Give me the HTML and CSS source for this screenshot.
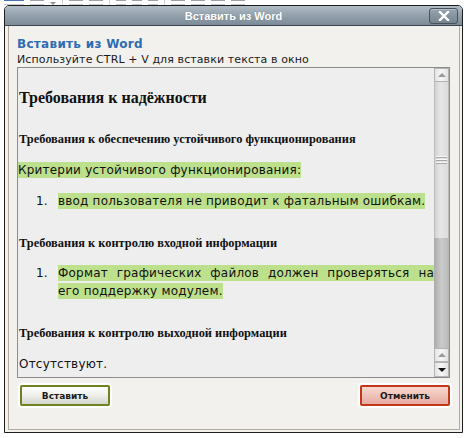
FILE: index.html
```html
<!DOCTYPE html>
<html lang="ru">
<head>
<meta charset="utf-8">
<title>Вставить из Word</title>
<link rel="stylesheet" href="styles.css">
</head>
<body>
<div class="toolbar">
  <span class="tb tb-list"></span>
  <span class="tb tb-lines"></span>
  <span class="tb tb-arrow"></span>
  <span class="tb-sep"></span>
  <span class="tb tb-lines"></span>
  <span class="tb tb-lines"></span>
  <span class="tb-sep"></span>
  <span class="tb tb-small"></span>
  <span class="tb tb-small"></span>
  <span class="tb tb-small"></span>
  <span class="tb-sep"></span>
  <span class="tb tb-lines"></span>
  <span class="tb tb-lines"></span>
  <span class="tb tb-lines"></span>
  <span class="tb tb-lines"></span>
</div>
<div class="dialog">
  <div class="titlebar">
    <span></span>
    <span class="title">Вставить из Word</span>
    <button class="close" type="button" aria-label="Закрыть">
      <svg width="12" height="10" viewBox="0 0 12 10"><path d="M2 1 L10 9 M10 1 L2 9" stroke="#fff" stroke-width="2.4" stroke-linecap="square"/></svg>
    </button>
  </div>
  <div class="body">
    <div class="inner">
      <div class="heading">Вставить из Word</div>
      <div class="hint">Используйте CTRL + V для вставки текста в окно</div>
      <div class="frame">
        <div class="doc">
          <h1>Требования к надёжности</h1>
          <h3 class="h-a">Требования к обеспечению устойчивого функционирования</h3>
          <p class="p-a"><span class="hl">Критерии устойчивого функционирования:</span></p>
          <ol class="ol-a"><li><span class="hl">ввод пользователя не приводит к фатальным ошибкам.</span></li></ol>
          <h3 class="h-b">Требования к контролю входной информации</h3>
          <ol class="ol-b"><li><span class="hl">Формат графических файлов должен проверяться на его поддержку модулем.</span></li></ol>
          <h3 class="h-b">Требования к контролю выходной информации</h3>
          <p class="p-b">Отсутствуют.</p>
        </div>
        <div class="scrollbar">
          <div class="sb-btn"><span class="arr up dim"></span></div>
          <div class="sb-thumb"><span class="grip"></span></div>
          <div class="sb-track"></div>
          <div class="sb-btn"><span class="arr up dim"></span></div>
          <div class="sb-btn"><span class="arr down"></span></div>
        </div>
      </div>
      <div class="buttons">
        <button class="btn ok" type="button">Вставить</button>
        <button class="btn cancel" type="button">Отменить</button>
      </div>
    </div>
  </div>
</div>
</body>
</html>
```
FILE: styles.css
```css
html, body {
  margin: 0;
  padding: 0;
  background: #ffffff;
}
body {
  padding: 0 5px 0 4px;
  font-family: "DejaVu Sans", sans-serif;
}
.toolbar {
  height: 5px;
  overflow: hidden;
  display: flex;
  align-items: flex-end;
  gap: 6px;
}
.tb {
  display: block;
  height: 3px;
  width: 14px;
  border-top: 1px solid #9aa0a8;
  border-bottom: 1px solid #c8ccd2;
}
.tb-list { width: 20px; border-top-color: #4a72b8; }
.tb-small { width: 10px; }
.tb-arrow {
  width: 0; height: 0;
  border-left: 3px solid transparent;
  border-right: 3px solid transparent;
  border-top: 3px solid #8a9098;
  border-bottom: 0;
}
.tb-sep { width: 1px; height: 5px; background: #d0d4d8; }

.dialog {
  width: 457px;
  border: 1px solid #1e1e1e;
  border-radius: 5px 5px 0 0;
  overflow: hidden;
}
.titlebar {
  height: 19px;
  border-bottom: 1px solid #39444e;
  background: linear-gradient(#b0bcc6 0%, #95a3ae 45%, #7d8c99 100%);
  display: grid;
  grid-template-columns: 1fr auto 1fr;
  align-items: center;
}
.title {
  color: #ffffff;
  font-family: "Liberation Sans", sans-serif;
  font-weight: bold;
  font-size: 11px;
  text-shadow: 0 0 1px rgba(60,70,80,.4);
}
.close {
  justify-self: end;
  margin-right: 4px;
  width: 29px;
  height: 16px;
  padding: 0;
  border: 1px solid #46525d;
  border-radius: 3px;
  background: linear-gradient(#96a4b0, #76858f);
  box-shadow: inset 0 1px 0 rgba(255,255,255,.3);
  display: flex;
  align-items: center;
  justify-content: center;
}
.close svg { display: block; }

.body {
  background: #f2f1ee;
  padding: 0 2px 2px 3px;
}
.inner {
  height: 392px;
  border: 1px solid #b3aa9b;
  border-top: none;
  padding: 11px 9px 0 8px;
}
.heading {
  color: #2f6cb2;
  font-weight: bold;
  font-size: 12px;
  line-height: 15px;
  letter-spacing: 0.3px;
}
.hint {
  color: #1a1a1a;
  font-size: 11px;
  line-height: 15px;
  letter-spacing: 0.1px;
}
.frame {
  height: 309px;
  border: 1px solid #8c8c8c;
  background: #eeeeee;
  display: flex;
}
.doc {
  flex: 1;
  overflow: hidden;
  padding: 20px 0 0 1px;
  color: #111;
  font-size: 12px;
  letter-spacing: 0.2px;
}
.doc h1 {
  margin: 0;
  font-family: "Liberation Serif", serif;
  font-size: 16px;
  line-height: 20px;
  font-weight: bold;
  letter-spacing: 0;
}
.doc h3 {
  margin: 0;
  font-family: "Liberation Serif", serif;
  font-size: 12.4px;
  line-height: 16px;
  font-weight: bold;
  letter-spacing: 0;
}
.doc .h-a { margin-top: 23px; }
.doc .h-b { margin-top: 25px; }
.doc p, .doc ol { margin: 0; line-height: 18px; }
.doc .p-a { margin-top: 14px; margin-left: -1px; }
.doc .ol-a { margin-top: 13px; }
.doc .ol-b { margin-top: 13px; text-align: justify; }
.doc .p-b { margin-top: 14px; }
.doc ol { padding-left: 39px; }
.doc li::marker { content: counter(list-item) ". \2002"; }
.hl {
  background: #bde08c;
  padding: 1px 0;
}

.scrollbar {
  width: 15px;
  display: flex;
  flex-direction: column;
  background: #d6d6d6;
}
.sb-btn {
  height: 14px;
  border: 1px solid #b4b4b4;
  box-sizing: border-box;
  background: linear-gradient(90deg, #e4e4e4, #f6f6f6 50%, #e2e2e2);
  display: flex;
  align-items: center;
  justify-content: center;
}
.sb-btn + .sb-btn { height: 15px; }
.arr {
  width: 0; height: 0;
  border-left: 4px solid transparent;
  border-right: 4px solid transparent;
}
.arr.up { border-bottom: 4px solid #111; }
.arr.down { border-top: 4px solid #111; }
.arr.dim.up { border-bottom-color: #9a9a9a; }
.sb-thumb {
  height: 156px;
  border-left: 1px solid #bdbdbd;
  border-right: 1px solid #bdbdbd;
  background: linear-gradient(90deg, #d2d2d2, #e6e6e6 40%, #dcdcdc);
  display: flex;
  align-items: center;
  justify-content: center;
}
.grip {
  width: 11px;
  height: 9px;
  background: repeating-linear-gradient(#f8f8f8 0 1px, #a8a8a8 1px 2px, transparent 2px 3px);
}
.sb-track {
  flex: 1;
  background: linear-gradient(90deg, #aaaaaa, #cbcbcb 50%, #b8b8b8);
}

.buttons {
  display: flex;
  justify-content: space-between;
  margin-top: 7px;
  padding-left: 3px;
}
.btn {
  width: 90px;
  height: 21px;
  padding: 0;
  font-family: "DejaVu Sans", sans-serif;
  font-size: 9px;
  font-weight: bold;
  color: #1a1a1a;
  border-radius: 2px;
  box-shadow: 0 0 0 2px rgba(255,255,255,.9);
}
.btn.ok {
  border: 2px solid #6f8220;
  background: linear-gradient(#ffffff, #eeeeea 50%, #d6d6d0);
}
.btn.cancel {
  border: 2px solid #c2371a;
  background: linear-gradient(#f8d8d0, #f0c2b8 50%, #e6aaa0);
}
```
